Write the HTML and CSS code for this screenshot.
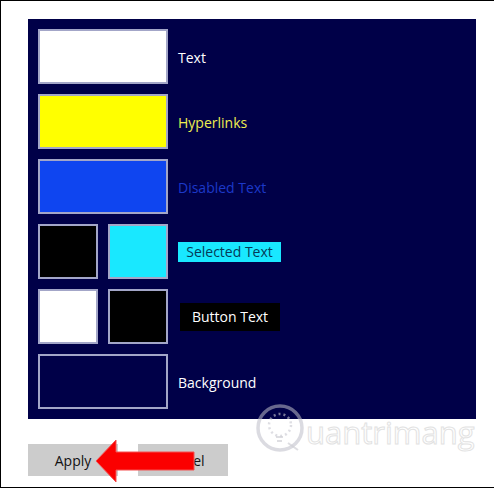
FILE: index.html
```html
<!DOCTYPE html>
<html lang="en">
<head>
<meta charset="utf-8">
<title>High contrast colours</title>
<link rel="stylesheet" href="styles.css">
</head>
<body>
<div class="frame">
  <div class="panel">
    <div class="row">
      <div class="swatches"><div class="swatch wide white"></div></div>
      <span class="label text-white">Text</span>
    </div>
    <div class="row">
      <div class="swatches"><div class="swatch wide yellow"></div></div>
      <span class="label text-yellow">Hyperlinks</span>
    </div>
    <div class="row">
      <div class="swatches"><div class="swatch wide blue"></div></div>
      <span class="label text-blue">Disabled Text</span>
    </div>
    <div class="row">
      <div class="swatches"><div class="swatch black"></div><div class="swatch cyan"></div></div>
      <span class="label selected">Selected Text</span>
    </div>
    <div class="row">
      <div class="swatches"><div class="swatch white"></div><div class="swatch black"></div></div>
      <span class="label button-text">Button Text</span>
    </div>
    <div class="row">
      <div class="swatches"><div class="swatch wide navy"></div></div>
      <span class="label text-white">Background</span>
    </div>
  </div>
  <div class="actions">
    <button class="btn" type="button">Apply</button>
    <button class="btn" type="button">Cancel</button>
  </div>
  <svg class="arrow" width="100" height="44" viewBox="0 0 100 44" aria-hidden="true">
    <polygon points="1,22 21,1 21,13 99,13 99,31 21,31 21,43" fill="#fb0000" stroke="#f45050" stroke-width="1"/>
  </svg>
  <div class="watermark" aria-hidden="true">
    <svg class="wm-logo" width="50" height="54" viewBox="0 0 50 54">
      <circle cx="25" cy="25" r="22" fill="none" stroke="#bebec8" stroke-opacity="0.55" stroke-width="3.5"/>
      <circle cx="25" cy="22" r="11" fill="none" stroke="#c8c8d0" stroke-opacity="0.6" stroke-width="2.5" stroke-dasharray="2 3"/>
      <path d="M21 34h7M22 38h5M33 40l10 7" stroke="#d0d0d6" stroke-opacity="0.7" stroke-width="2" fill="none"/>
    </svg>
    <span class="wm-text">uantrimang</span>
  </div>
</div>
</body>
</html>
```
FILE: styles.css
```css
html, body {
  margin: 0;
  padding: 0;
  background: #fff;
}

.frame {
  position: relative;
  box-sizing: border-box;
  width: 494px;
  height: 488px;
  border-top: 1px solid #000;
  border-left: 1px solid #000;
  border-bottom: 1px solid #000;
  padding: 18px 18px 0 27px;
  font-family: "Open Sans", "Noto Sans", sans-serif;
  overflow: hidden;
}

.panel {
  box-sizing: border-box;
  height: 400px;
  background: #000048;
  padding: 10px;
  display: flex;
  flex-direction: column;
  gap: 10px;
}

.row {
  display: flex;
  align-items: center;
  gap: 10px;
  height: 55px;
}

.swatches {
  display: flex;
  gap: 10px;
  width: 130px;
}

.swatch {
  box-sizing: border-box;
  width: 60px;
  height: 55px;
  border: 2px solid #a3a6c8;
}

.swatch.wide { width: 130px; }
.white { background: #fff; }
.yellow { background: #ff0; }
.blue { background: #0f45f0; }
.black { background: #000; }
.cyan { background: #19e8ff; }
.navy { background: #000048; }

.label {
  font-size: 14px;
  line-height: 20px;
  margin-top: 2px;
  white-space: nowrap;
}

.text-white { color: #fff; }
.text-yellow { color: #eeee50; }
.text-blue { color: #1c38c8; }

.selected {
  box-sizing: border-box;
  width: 103px;
  height: 20px;
  margin-top: 1px;
  background: #19e8ff;
  color: #043a58;
  text-align: center;
}

.button-text {
  box-sizing: border-box;
  width: 100px;
  height: 28px;
  line-height: 28px;
  margin-left: 2px;
  margin-top: 1px;
  background: #000;
  color: #fff;
  text-align: center;
}

.actions {
  display: flex;
  gap: 20px;
  margin-top: 25px;
}

.btn {
  width: 90px;
  height: 32px;
  border: 0;
  padding: 0;
  background: #ccc;
  color: #111;
  font: 14px "Open Sans", "Noto Sans", sans-serif;
}

.arrow {
  position: absolute;
  left: 94px;
  top: 438px;
}

.watermark {
  position: absolute;
  left: 254px;
  top: 402px;
  display: flex;
  align-items: flex-start;
}

.wm-logo { display: block; }

.wm-text {
  margin-left: 1px;
  margin-top: 7px;
  font-family: "Open Sans", sans-serif;
  font-size: 31px;
  line-height: 44px;
  color: #fff;
  -webkit-text-stroke: 1px #e2e2e2;
}
```
